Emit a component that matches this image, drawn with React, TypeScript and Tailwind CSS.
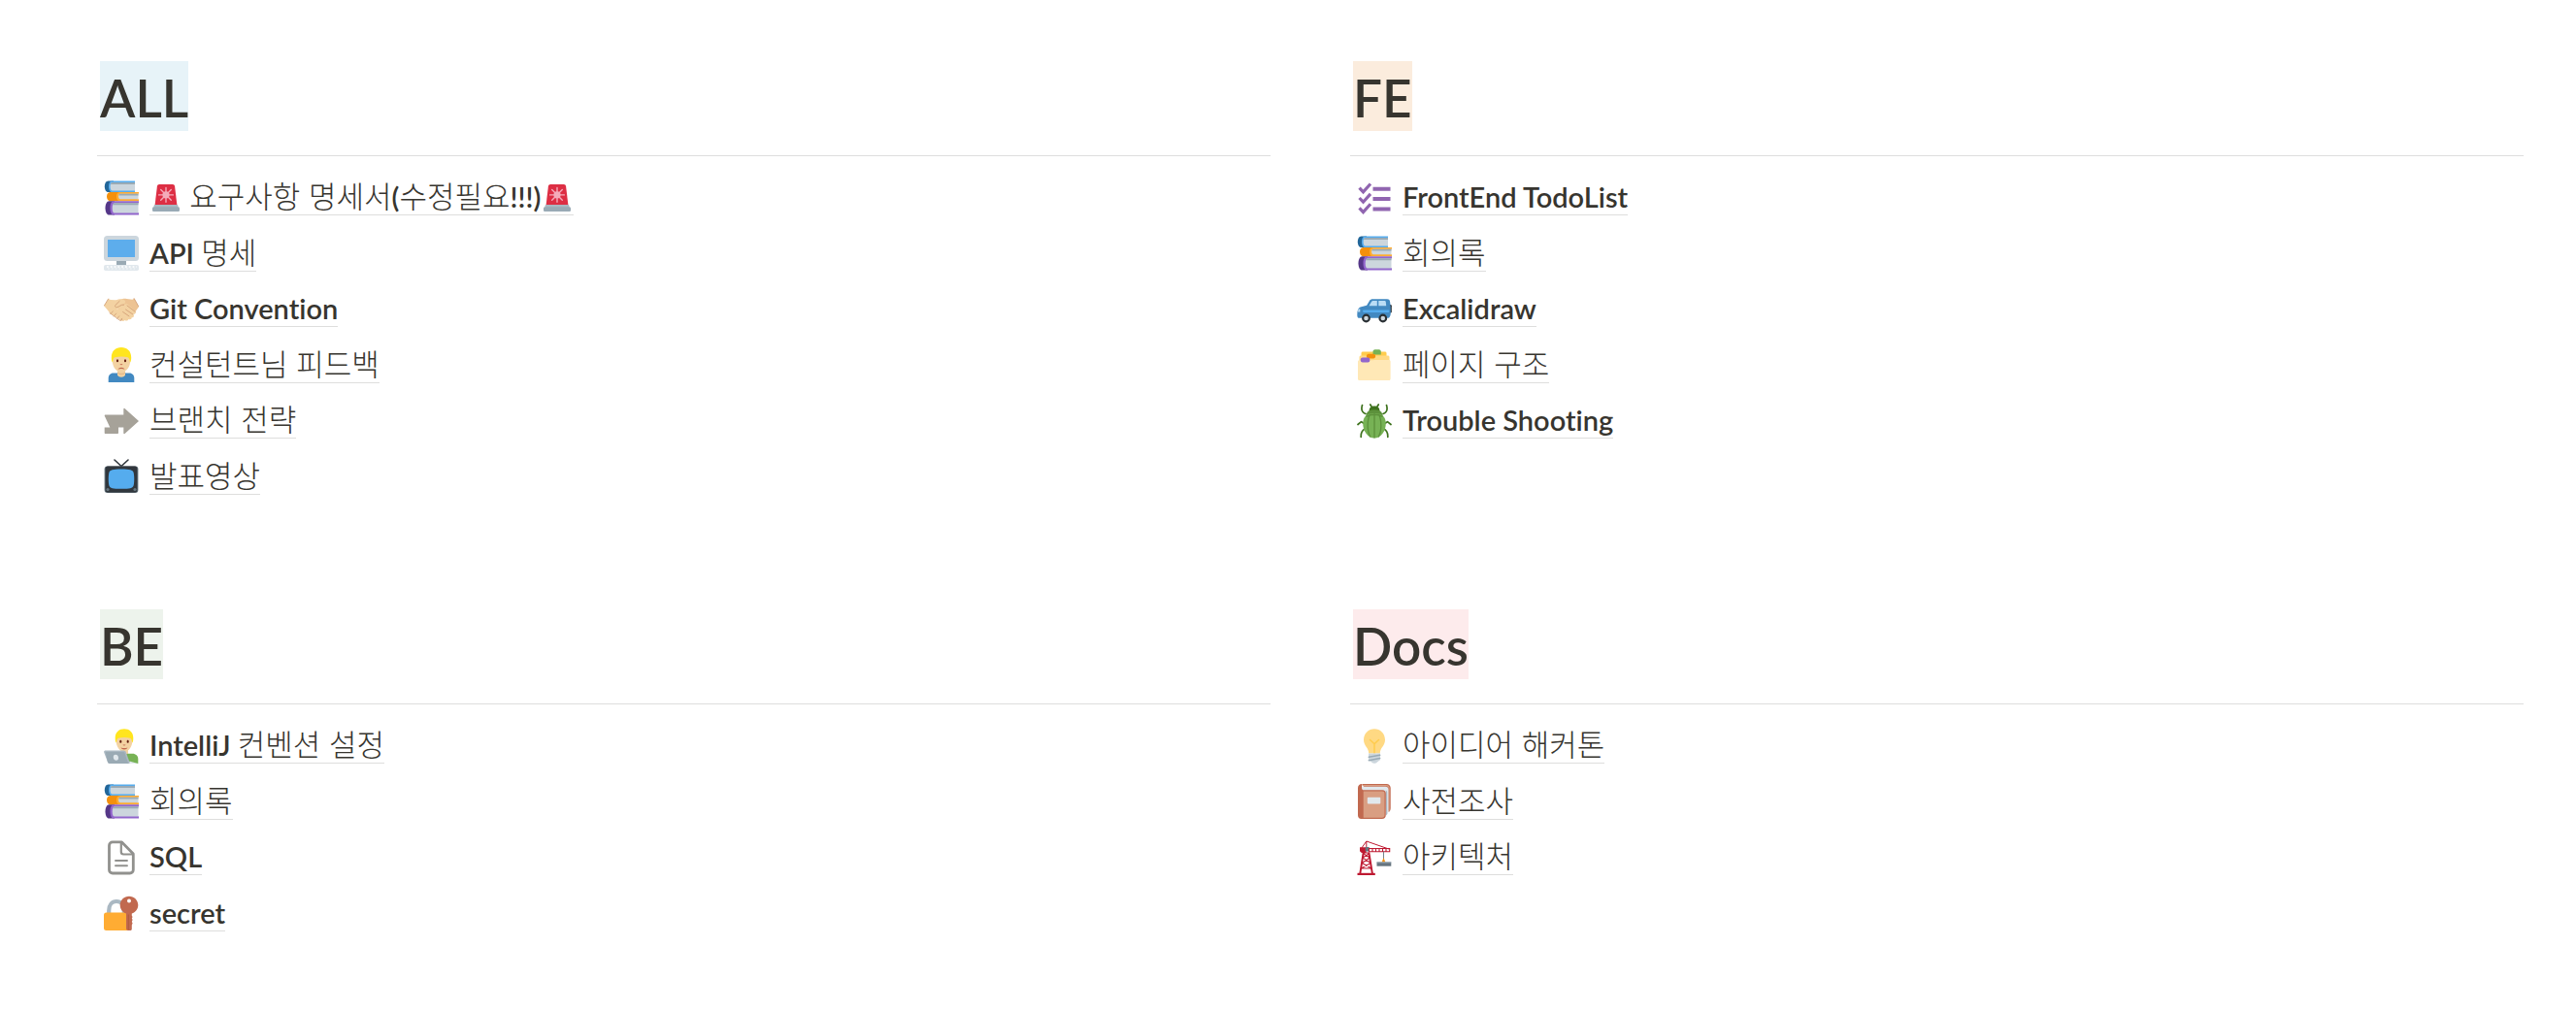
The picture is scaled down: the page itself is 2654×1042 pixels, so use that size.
import type { ReactNode } from "react";

/* ---------- icons ---------- */

function Icon({ children, small }: { children: ReactNode; small?: boolean }) {
  return (
    <svg
      viewBox="0 0 36 36"
      fill="none"
      aria-hidden="true"
      className={small ? "mx-[3px] inline-block size-[28px] align-[-4px]" : "size-[36px] shrink-0"}
    >
      {children}
    </svg>
  );
}

const Siren = () => (
  <Icon small>
    <path fill="#DD2E44" d="M32.8 28.5H3.2L6.3 2.6C6.5 1 7.700 0 9.200 0h17.600c1.500 0 2.700 1 2.900 2.600z" />
    <g stroke="#F4ABBA" strokeLinecap="round" strokeWidth="1.800">
      <path d="M18 4.500v19M8.500 14h19M11.200 7.200l13.600 13.600M24.800 7.200L11.200 20.800" />
    </g>
    <circle cx="18" cy="14" r="4.600" fill="#F4ABBA" />
    <path fill="#AAB8C2" d="M3.500 27h29c1 0 1.500.8 1.500 1.800V31H2v-2.200C2 27.800 2.500 27 3.500 27z" />
    <path fill="#99AAB5" d="M2 30h32c1.200 0 2 .9 2 2v2.500c0 1-.5 1.500-1.500 1.500h-33C.5 36 0 35.500 0 34.500V32c0-1.100.8-2 2-2z" />
  </Icon>
);

const Books = () => (
  <Icon>
    <path fill="#269" d="M4.500.5H10V12H4.500C2 12 .8 9 .8 6.200.8 3.500 2 .5 4.500.5z" />
    <path fill="#55ACEE" d="M32 .5H8C6 .5 5 3 5 6.200S6 12 8 12h24v-1.800L31 6.500l1-4z" />
    <path fill="#CCD6DD" d="M32 2H8.500C7.200 2 6.600 4 6.600 6.200s.6 4.200 1.900 4.200H32z" />
    <path fill="#9AAAB4" d="M32 2H8.500c-.8 0-1.300.7-1.600 2H32z" />
    <path fill="#F4900C" d="M6.500 12H16v9.300H6.500C4.200 21.300 3 19 3 16.600S4.200 12 6.500 12z" />
    <path fill="#FFAC33" d="M36 12H16c-2 0-3 2.200-3 4.600s1 4.700 3 4.700h20v-2.100h-1.500v-5.400H36z" />
    <path fill="#CCD6DD" d="M35.500 13.800H17c-1.300 0-1.900 1.200-1.900 2.800s.6 2.700 1.900 2.700h18.500z" />
    <path fill="#9AAAB4" d="M35.500 13.800H17c-.9 0-1.500.6-1.700 1.800h20.200z" />
    <path fill="#553788" d="M5.500 21.200H11v14.300H5.500c-2.600 0-4-3.500-4-7.100s1.400-7.200 4-7.200z" />
    <path fill="#9266CC" d="M36 21.200H10c-2.400 0-3.500 3.500-3.500 7.200s1.100 7.100 3.500 7.100h26v-2.200h-1V23.500h1z" />
    <path fill="#CCD6DD" d="M35.500 23.200H11c-1.600 0-2.300 2.300-2.300 5.200s.7 5.100 2.300 5.100h24.500z" />
    <path fill="#9AAAB4" d="M35.500 23.200H11c-.9 0-1.500.7-1.900 2h26.400z" />
  </Icon>
);

const Monitor = () => (
  <Icon>
    <path fill="#9AAAB4" d="M13 24h10v6H13z" />
    <rect width="36" height="26" fill="#CCD6DD" rx="3.500" />
    <path fill="#5DADEC" d="M4 4h28v18H4z" />
    <rect y="30" width="36" height="6" fill="#E1E8ED" rx="1.800" />
    <path stroke="#fff" strokeWidth="1.300" strokeDasharray="1.800 2" d="M3 32h31" />
    <path stroke="#F5F8FA" strokeWidth="1.200" strokeDasharray="1.800 2" d="M4 34h28" />
  </Icon>
);

const Handshake = () => (
  <Icon>
    <path fill="#EDC393" d="M16.400 8.200C18 7 21.500 6.300 23.500 7l6 .800 1.700-1.300L36 15.200l-4 5.600-5 3.500-8 1-5-9z" />
    <path fill="#F3D2A2" d="M.2 14.200L4.800 6.900l2.100 1.200 5.300.200c2-.5 4-1.200 6.200-1 2.500.3 5 2.200 3.300 4.200-1.500 1.700-4 .6-6 1.700l-2.600 4.500 7 .1 9.900 5.100c1.800 1.200.8 3.600-1.200 3.200 0 2-1.700 2.800-3.400 1.900-.6 1.700-2.400 2.100-4 1-.8 1.200-2.500 1.100-3.900.1L7 22.400 4.200 19z" />
    <path fill="#F3D2A2" d="M12 17.500l4.600-6.200c2.200 1.800 5 1.600 7.200.6l8.600 8.200c1.300 1.500-.6 3.500-2.300 2.600.8 2-1.200 3.400-3 2.100L19 18z" />
    <path stroke="#D2A077" strokeWidth=".9" strokeLinecap="round" strokeLinejoin="round" d="M16.200 9.300l-4.400 4.300c-.8 1 .1 2.400 1.600 2.100 3-.6 4-3 7.200-2.600M24 14l8.200 6.300M22.500 18l7.400 5M19.600 20.500l6.400 4.400M4.600 7.100L.4 14M31.200 6.700l4.500 8" />
    <path stroke="#D2A077" strokeWidth=".8" strokeLinecap="round" d="M7 22.500l2.300-2.700M10.200 25l2.500-2.900M13.700 27.400l2.100-2.600M17.100 29.400l1.700-2.200M6 21.500L16.200 29c2 1 3-.5 2.500-1" />
  </Icon>
);

const ManFrowning = () => (
  <Icon>
    <path fill="#4289C1" d="M4.700 36v-4.300c0-3 2-5.300 5-5.300h16.600c3 0 5 2.300 5 5.300V36z" />
    <path fill="#F3D2A2" d="M14 23h8v5.500c-1.500 3-6.500 3-8 0z" />
    <path fill="#E6BC8C" d="M14 25.500c2.500 1.700 5.500 1.700 8 0v1.200c-2.500 2.200-5.500 2.200-8 0z" />
    <path fill="#F3D2A2" d="M8.700 12.500C8.700 5 12 2.200 18 2.200s9.300 2.800 9.300 10.300c0 8.200-4.200 13-9.300 13s-9.300-4.800-9.300-13z" />
    <path fill="#FFE51E" d="M7.800 10.500C7.800 3.500 12.300 0 18 0s10.200 3.500 10.200 10.500c0 2.300-.4 4.300-1.200 4.900-.4-1.900-.8-4.700-2.300-5.200-4.500-1-8.900-1-13.400 0-1.500.5-1.900 3.300-2.300 5.200-.8-.6-1.200-2.600-1.200-4.900z" />
    <path fill="#662113" d="M14 15.200a1.100 1.500 0 100-3 1.100 1.500 0 000 3zM22 15.200a1.100 1.500 0 100-3 1.100 1.500 0 000 3z" />
    <path fill="#C1694F" d="M16.500 17.300h3c-.5 1.400-2.500 1.400-3 0zM14.500 22.800c1-2.900 6-2.900 7 0-2.300-1-4.700-1-7 0z" />
  </Icon>
);

const Arrow = () => (
  <Icon>
    <path fill="#A6A299" d="M.7 12.500c0-.6.400-1 1-1h18.600V5.600c0-.7.700-1 1.200-.6L36 18 21.500 31c-.5.400-1.200.1-1.200-.6v-5.900H15V30c0 .6-.4 1-1 1H1.700c-.6 0-1-.4-1-1v-5.500h5.600z" />
  </Icon>
);

const Television = () => (
  <Icon>
    <path stroke="#31373D" strokeWidth="1.600" strokeLinecap="round" d="M11 1l7 6.500L25 1" />
    <rect x=".6" y="7.500" width="34.800" height="27.500" rx="3" fill="#66757F" />
    <rect x="1.600" y="7.500" width="32.800" height="27" rx="2.500" fill="#31373D" />
    <path fill="#55ACEE" d="M18 10.500c9 0 11.500.8 12.500 3.200 1 3 1 11 0 14-1 2.300-3.500 3.100-12.500 3.100s-11.500-.8-12.500-3.100c-1-3-1-11 0-14 1-2.400 3.500-3.200 12.500-3.200z" />
    <circle cx="4" cy="31.500" r="1.600" fill="#66757F" />
    <circle cx="32" cy="31.500" r="1.600" fill="#66757F" />
  </Icon>
);

const Checklist = () => (
  <Icon>
    <g stroke="#9065B0" strokeWidth="3.200">
      <path d="M2.500 7.600l4 4.200 7.500-8.300M2.500 18l4 4.200 7.500-8.300M2.500 28.400l4 4.200 7.500-8.300" />
      <path strokeWidth="4" d="M16.500 8.700h18M16.500 19h18M16.500 29.400h18" />
    </g>
  </Icon>
);

const Car = () => (
  <Icon>
    <rect x="32.500" y="13" width="3.300" height="8.500" rx="1.200" fill="#292F33" />
    <path fill="#4289C1" d="M.3 23.500c0-4.200.9-7.200 3.200-8l6.600-1.700 3.200-5.200c.5-.8 1.500-1.400 3-1.400h14.800c1.700 0 2.600.8 2.900 2.300.6 3.200.8 7 .8 12 0 3-1 4.800-2.300 5.200H1.800C.7 26.700.3 25 .3 23.500z" />
    <path fill="#BBDDF5" d="M12.500 14.300l2.500-4.300c.4-.7.900-1 1.700-1h4.100v5.300zM22.300 9h6.100c.9 0 1.300.4 1.400 1.300l.4 4h-7.900z" />
    <path fill="#55ACEE" d="M7 18.500h25.500c1.300 0 1.300 2.400 0 2.400H7c-1.300 0-1.300-2.400 0-2.400z" />
    <path fill="#BBDDF5" d="M1.500 17.500h1.800v3H1z" />
    <circle cx="9.500" cy="27" r="4.400" fill="#292F33" />
    <circle cx="26.800" cy="27" r="4.400" fill="#292F33" />
    <circle cx="9.500" cy="27" r="2.300" fill="#CCD6DD" />
    <circle cx="26.800" cy="27" r="2.300" fill="#CCD6DD" />
  </Icon>
);

const Folders = () => (
  <Icon>
    <path fill="#FFCC4D" d="M4.500 6c0-.9.700-1.600 1.600-1.600h22.800c.9 0 1.600.7 1.600 1.600v8h-26z" />
    <path fill="#77B255" d="M16.500 4.500c0-1.200.8-2.200 2-2.200h4.300c1.200 0 2 1 2 2.200v3h-8.300z" />
    <path fill="#FFD983" d="M2.500 10c0-.9.700-1.600 1.600-1.600h27.800c.9 0 1.600.7 1.600 1.600v6h-31z" />
    <path fill="#F4900C" d="M9.800 9c0-1.200 1-2.300 2.200-2.300h5c1.200 0 2.200 1 2.200 2.300 0 1.300-1 2.500-2.200 2.500h-5c-1.200 0-2.200-1.200-2.200-2.500z" />
    <path fill="#FFE8B6" d="M1 14.700c0-.9.600-1.500 1.500-1.500H16l2-.3h15c1 0 1.600.6 1.600 1.500v18.100c0 .9-.6 1.500-1.500 1.500H2.500c-.9 0-1.500-.6-1.500-1.500z" />
    <rect x="3.800" y="10.400" width="9.500" height="5" rx="2" fill="#9266CC" />
  </Icon>
);

const Beetle = () => (
  <Icon>
    <path stroke="#3E721D" strokeWidth="1.700" strokeLinecap="round" strokeLinejoin="round" d="M9 10.500C4.500 9 4.300 5.500 5.500 1.500M27 10.500c4.500-1.500 4.700-5 3.500-9M7.500 20.500l-3-1.800-3.500 2.800M28.500 20.500l3-1.800 3.500 2.800M8.500 26c-3.500 1.500-4.500 4.500-4.300 8.500M27.500 26c3.500 1.500 4.500 4.500 4.300 8.500M15 3l-1.200-2M21 3l1.200-2" />
    <path fill="#3E721D" d="M12.500 8c0-3.800 2.200-5.500 5.500-5.500s5.500 1.700 5.500 5.500z" />
    <path fill="#5C913B" d="M10 10c1.500-3 4.200-3.800 8-3.800S24.500 7 26 10l1 4H9z" />
    <path fill="#77B255" d="M6.200 20.500C6.200 13 10.500 10 18 10s11.800 3 11.800 10.500S25 35.500 18 35.500 6.200 28 6.200 20.500z" />
    <path stroke="#5C913B" strokeWidth="1.300" d="M18 10v25.500M13.500 11c-3.200 6-3.200 17.500.5 23.500M22.500 11c3.200 6 3.200 17.500-.5 23.500M9.500 13.500c5-3 12-3 17 0" />
  </Icon>
);

const Technologist = () => (
  <Icon>
    <path fill="#F3D2A2" d="M17.500 20h7.500v7h-7.500z" />
    <path fill="#77B255" d="M20 28.500c2-2 3.500-2.500 5-2.800h4.500c3.300 0 5.800 2.300 5.800 5.500V36H22z" />
    <path fill="#E1E8ED" d="M24 36c.3-1.800 2-2.600 4-2l7.300 2z" />
    <path fill="#F3D2A2" d="M12.600 11.500c0-6.300 3.200-9 8.400-9s8.400 2.700 8.400 9c0 7.500-3.700 12-8.400 12s-8.400-4.500-8.400-12z" />
    <path fill="#FFE51E" d="M11.700 9.800C11.700 3.500 15.800.3 21 .3s9.300 3.200 9.300 9.500c0 2.200-.3 4-1 4.600-.4-1.800-.8-4.200-2.200-4.700-4-1-8.100-1-12.200 0-1.400.5-1.800 2.900-2.200 4.700-.7-.6-1-2.400-1-4.600z" />
    <path fill="#662113" d="M17.300 14.700a1.100 1.500 0 100-3 1.100 1.500 0 000 3zM24.700 14.700a1.100 1.500 0 100-3 1.100 1.500 0 000 3z" />
    <path fill="#C1694F" d="M19.500 16.500h3c-.5 1.200-2.500 1.200-3 0zM17.500 19.500c2.300.8 4.700.8 7 0-1 2.600-6 2.600-7 0z" />
    <path fill="#AAB8C2" d="M1.700 22.500h18.600c1.300 0 2.200.7 2.600 1.900l3.600 10c.4 1-.1 1.600-1.200 1.600H6.200c-1.200 0-2-.6-2.300-1.700L.2 24.500c-.3-1.200.3-2 1.500-2z" />
    <path fill="#9AAAB4" d="M1.700 24h18c.9 0 1.600.5 1.900 1.400L25.200 36H6.200c-1.200 0-2-.6-2.300-1.700z" />
    <path fill="#E1E8ED" d="M12 26.800c1.600 0 2.800 1.300 3 3 .2 1.800-.7 3-2.200 3s-2.800-1.200-3-3c-.2-1.700.7-3 2.200-3z" />
  </Icon>
);

const Page = () => (
  <Icon>
    <path stroke="#91918E" strokeWidth="2.800" strokeLinejoin="round" d="M9 1.900h9.500L30.300 14v16.500c0 2-1.500 3.500-3.500 3.500H9c-2 0-3.500-1.500-3.500-3.500V5.400c0-2 1.500-3.500 3.500-3.500z" />
    <path stroke="#91918E" strokeWidth="2.200" strokeLinejoin="round" d="M17.800 2.500V12c0 1.600.9 2.500 2.500 2.500h9.200" />
    <path stroke="#91918E" strokeWidth="1.900" strokeLinecap="round" d="M12 21h12M12 26.300h12" />
  </Icon>
);

const LockKey = () => (
  <Icon>
    <path stroke="#AAB8C2" strokeWidth="4.200" d="M5.200 20v-4.500C5.200 9.500 8.500 6 13 6s7.800 3.500 7.800 9.500V20" />
    <rect y="17.500" width="27" height="18.500" rx="2.500" fill="#FFAC33" />
    <path fill="#C1694F" d="M26 .8c5 0 9.300 3.900 9.300 9 0 4.300-2.700 7.600-6.500 8.700v2.200l.8 1.300-.8 1.500.8 1.500-.8 2 .8 1.500-.8 2v4c0 1-.9 1.500-2.300 1.500h-1.200c-1.400 0-2.300-.7-2.300-1.900V18.500c-3.800-1.100-6.300-4.400-6.300-8.700 0-5.100 4.300-9 9.300-9z" />
    <circle cx="26" cy="5.400" r="2" fill="#fff" />
    <path stroke="#A0522F" strokeWidth="1.100" d="M25.300 19.500v15.700" opacity=".5" />
  </Icon>
);

const Bulb = () => (
  <Icon>
    <path fill="#FFD983" d="M29 11.400c0 6.500-5.200 7.800-5.200 14.100H12.200C12.200 19.200 7 17.900 7 11.400 7 5 12 .2 18 .2s11 4.800 11 11.200z" />
    <path stroke="#FFCC4D" strokeWidth="1.500" strokeLinecap="round" strokeLinejoin="round" d="M13.500 11.500l4.500 4.300 4.500-4.300M18 15.800V25" />
    <path fill="#CCD6DD" d="M12 25.500h12v6.300c0 .7-.6 1.200-1.200 1.200L20 35.200c-.6.600-3.400.6-4 0L13.200 33c-.6 0-1.200-.5-1.200-1.200z" />
    <path stroke="#99AAB5" strokeWidth="1.500" strokeLinecap="round" d="M12.300 29.300l11.400-2M12.300 32.700l11.400-2.200" />
  </Icon>
);

const Notebook = () => (
  <Icon>
    <path fill="#C1694F" d="M5 0h25.500C33 0 34.700 1.700 34.700 4v21c0 2-.7 3-2 4l-1.500-5L28 4H8z" />
    <path fill="#D99E82" d="M30.300 1H5.500v1.200h24.800c1.500 0 2.300 1 2.300 2.500V29l1-1V4.500C33.600 2.300 32.500 1 30.300 1z" />
    <path fill="#E1E8ED" d="M4.500 2.800h25c1.800 0 3 1.200 3 3v21.700c0 2-1 4-2.300 5L28 9 5 6.800z" />
    <path fill="#AAB8C2" d="M29.800 6.500c1 .6 1.400 1.300 1.400 2.500v22l-1.200 1.500z" />
    <path fill="#C1694F" d="M1 4.200C1 1.800 2.500 0 5 0v4c0 1.500.8 2.300 2.500 2.300h18.800c2.200 0 3.500 1.300 3.500 3.500V32c0 2.500-1.500 4-4 4H4.500C2.300 36 1 34.500 1 32.300z" />
    <path fill="#D99E82" d="M6.700 7.500h19.500c1.500 0 2.300.8 2.300 2.300V32c0 1.800-.9 2.700-2.700 2.700H6.700z" />
    <rect x="10.800" y="13.700" width="13.500" height="6.800" rx="1" fill="#E1E8ED" />
  </Icon>
);

const Crane = () => (
  <Icon>
    <path stroke="#BE1931" strokeWidth="1" strokeLinejoin="round" d="M4.500 8.500L9.800 1l23 8M9.800 1v8" />
    <path fill="#BE1931" d="M3 7.200h6.500V13H4.800L3 11.200z" />
    <path fill="#66757F" d="M8.700 7h4v4.500h-4z" />
    <path stroke="#BE1931" strokeWidth="1.100" d="M12.500 8.500h21.200v3.200H12.500zM16 8.500v3.200M19.500 8.500v3.200M23 8.500v3.200M26.500 8.500v3.200M30 8.500v3.200" />
    <path stroke="#BE1931" strokeWidth="1.900" d="M6.700 12.500L3.200 35M12.300 12.500L16 35" />
    <path stroke="#BE1931" strokeWidth="1.100" d="M6.500 13h6M6 18l7-4.500M13.500 18L6.300 13.500M5.300 23.500l8-5.500M14.200 23.500L6 18M4.500 29l9.700-5.500M15 29l-9.700-5.500M4.500 29h10.700" />
    <path fill="#BE1931" d="M.5 33.800h18.300V36H.5z" />
    <path stroke="#66757F" strokeWidth=".9" d="M27.500 11.500v8" />
    <path fill="#F4900C" d="M27.500 18l1.800 4.500h-3.600z" />
    <path fill="#66757F" d="M20.500 22.500h14.800v4.200H20.500z" />
    <path fill="#99AAB5" d="M20.500 22.500h14.800v.9H20.500z" />
  </Icon>
);

/* ---------- text ---------- */

/** Sets Hangul runs in the lighter Korean face and leaves Latin runs as they are. */
function Mixed({ text }: { text: string }) {
  return (
    <>
      {text.split(/([\uac00-\ud7a3]+(?: [\uac00-\ud7a3]+)*)/).map((run, i) =>
        i % 2 === 1 ? (
          <span key={i} lang="ko" className="font-['Noto_Sans_CJK_KR',sans-serif] text-[31px] leading-[0] font-light">
            {run}
          </span>
        ) : (
          run
        ),
      )}
    </>
  );
}

type Entry = { icon: ReactNode; label: string; alert?: boolean };
type Group = { title: string; tint: string; entries: Entry[] };

const groups: Group[] = [
  {
    title: "ALL",
    tint: "bg-[#e7f3f8]",
    entries: [
      { icon: <Books />, label: "요구사항 명세서(수정필요!!!)", alert: true },
      { icon: <Monitor />, label: "API 명세" },
      { icon: <Handshake />, label: "Git Convention" },
      { icon: <ManFrowning />, label: "컨설턴트님 피드백" },
      { icon: <Arrow />, label: "브랜치 전략" },
      { icon: <Television />, label: "발표영상" },
    ],
  },
  {
    title: "FE",
    tint: "bg-[#fbecdd]",
    entries: [
      { icon: <Checklist />, label: "FrontEnd TodoList" },
      { icon: <Books />, label: "회의록" },
      { icon: <Car />, label: "Excalidraw" },
      { icon: <Folders />, label: "페이지 구조" },
      { icon: <Beetle />, label: "Trouble Shooting" },
    ],
  },
  {
    title: "BE",
    tint: "bg-[#edf3ec]",
    entries: [
      { icon: <Technologist />, label: "IntelliJ 컨벤션 설정" },
      { icon: <Books />, label: "회의록" },
      { icon: <Page />, label: "SQL" },
      { icon: <LockKey />, label: "secret" },
    ],
  },
  {
    title: "Docs",
    tint: "bg-[#fdebec]",
    entries: [
      { icon: <Bulb />, label: "아이디어 해커톤" },
      { icon: <Notebook />, label: "사전조사" },
      { icon: <Crane />, label: "아키텍처" },
    ],
  },
];

function Section({ title, tint, entries }: Group) {
  return (
    <section>
      <h2 className="ml-[3px] flex text-[53px] leading-[68px] font-semibold">
        <span className={`pt-[4px] ${tint}`}>{title}</span>
      </h2>
      <hr className="mt-[25px] border-t border-[#dededd]" />
      <ul className="pt-[14px]">
        {entries.map((entry) => (
          <li key={entry.label} className="flex items-center odd:h-[57px] even:h-[58px]">
            <a href="#" className="flex items-center gap-[11px] pl-[7px]">
              {entry.icon}
              <span className="border-b border-[#dededd] leading-[36px] whitespace-nowrap">
                {entry.alert && (
                  <>
                    <Siren />{" "}
                  </>
                )}
                <Mixed text={entry.label} />
                {entry.alert && <Siren />}
              </span>
            </a>
          </li>
        ))}
      </ul>
    </section>
  );
}

export default function App() {
  return (
    <main className="grid min-h-screen grid-cols-2 content-start gap-x-[82px] gap-y-[108px] bg-white pt-[63px] pr-[54px] pb-[60px] pl-[100px] font-[Lato,'Noto_Sans_CJK_KR',sans-serif] text-[29px] font-semibold text-[#37352f] [font-variant-ligatures:none]">
      {groups.map((group) => (
        <Section key={group.title} {...group} />
      ))}
    </main>
  );
}
